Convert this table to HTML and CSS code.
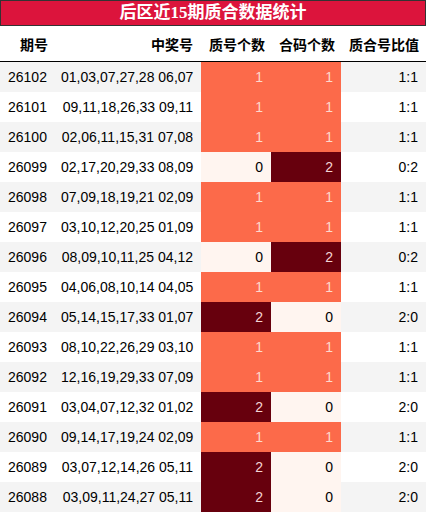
FILE: index.html
```html
<!DOCTYPE html>
<html>
    <head>
        <meta charset="UTF-8">
        <title>后区近15期质合数据统计</title>
        <link rel="stylesheet" href="styles.css">
    </head>
    <body>
        <div class="title">后区近15期质合数据统计</div>
        <table class="stats">
            <colgroup>
                <col class="w-issue">
                <col class="w-nums">
                <col class="w-cnt">
                <col class="w-cnt">
                <col class="w-ratio">
            </colgroup>
            <thead>
                <tr>
                    <th class="issue">期号</th>
                    <th>中奖号</th>
                    <th>质号个数</th>
                    <th>合码个数</th>
                    <th>质合号比值</th>
                </tr>
            </thead>
            <tbody>
                <tr><td class="issue">26102</td><td>01,03,07,27,28 06,07</td><td class="c1">1</td><td class="c1">1</td><td>1:1</td></tr>
                <tr><td class="issue">26101</td><td>09,11,18,26,33 09,11</td><td class="c1">1</td><td class="c1">1</td><td>1:1</td></tr>
                <tr><td class="issue">26100</td><td>02,06,11,15,31 07,08</td><td class="c1">1</td><td class="c1">1</td><td>1:1</td></tr>
                <tr><td class="issue">26099</td><td>02,17,20,29,33 08,09</td><td class="c0">0</td><td class="c2">2</td><td>0:2</td></tr>
                <tr><td class="issue">26098</td><td>07,09,18,19,21 02,09</td><td class="c1">1</td><td class="c1">1</td><td>1:1</td></tr>
                <tr><td class="issue">26097</td><td>03,10,12,20,25 01,09</td><td class="c1">1</td><td class="c1">1</td><td>1:1</td></tr>
                <tr><td class="issue">26096</td><td>08,09,10,11,25 04,12</td><td class="c0">0</td><td class="c2">2</td><td>0:2</td></tr>
                <tr><td class="issue">26095</td><td>04,06,08,10,14 04,05</td><td class="c1">1</td><td class="c1">1</td><td>1:1</td></tr>
                <tr><td class="issue">26094</td><td>05,14,15,17,33 01,07</td><td class="c2">2</td><td class="c0">0</td><td>2:0</td></tr>
                <tr><td class="issue">26093</td><td>08,10,22,26,29 03,10</td><td class="c1">1</td><td class="c1">1</td><td>1:1</td></tr>
                <tr><td class="issue">26092</td><td>12,16,19,29,33 07,09</td><td class="c1">1</td><td class="c1">1</td><td>1:1</td></tr>
                <tr><td class="issue">26091</td><td>03,04,07,12,32 01,02</td><td class="c2">2</td><td class="c0">0</td><td>2:0</td></tr>
                <tr><td class="issue">26090</td><td>09,14,17,19,24 02,09</td><td class="c1">1</td><td class="c1">1</td><td>1:1</td></tr>
                <tr><td class="issue">26089</td><td>03,07,12,14,26 05,11</td><td class="c2">2</td><td class="c0">0</td><td>2:0</td></tr>
                <tr><td class="issue">26088</td><td>03,09,11,24,27 05,11</td><td class="c2">2</td><td class="c0">0</td><td>2:0</td></tr>
            </tbody>
        </table>
    </body>
</html>
```

FILE: styles.css
```css
body {
    margin: 0;
    width: 426px;
    background: #fff;
    font-family: "Liberation Sans", "Noto Sans CJK SC", sans-serif;
    font-size: 14px;
    color: #000;
}

.title {
    height: 24px;
    line-height: 24px;
    background: #dc143c;
    border: 1px solid #333;
    color: #fff;
    text-align: center;
    font-family: "Liberation Serif", "Noto Sans CJK SC", serif;
    font-size: 17px;
    font-weight: bold;
}

.stats {
    width: 426px;
    border-collapse: collapse;
    table-layout: fixed;
}

.w-issue { width: 53px; }
.w-nums { width: 148px; }
.w-cnt { width: 70px; }
.w-ratio { width: 85px; }

.stats th {
    height: 35px;
    padding: 0 8px;
    font-weight: bold;
    text-align: right;
    white-space: nowrap;
    border-bottom: 1px solid #000;
    font-family: "Noto Sans CJK SC", sans-serif;
}

.stats th.issue {
    text-align: left;
    padding-left: 20px;
}

.stats td {
    height: 30px;
    padding: 0 8px;
    text-align: right;
    white-space: nowrap;
}

.stats td.issue {
    text-align: left;
}

.stats tbody tr:nth-child(odd) {
    background: #f4f4f4;
}

.stats td.c1 {
    background: #fc6a4a;
    color: #fdd9cc;
}

.stats td.c2 {
    background: #67000d;
    color: #f4d4d4;
}

.stats td.c0 {
    background: #fff5f0;
    color: #000;
}
```
